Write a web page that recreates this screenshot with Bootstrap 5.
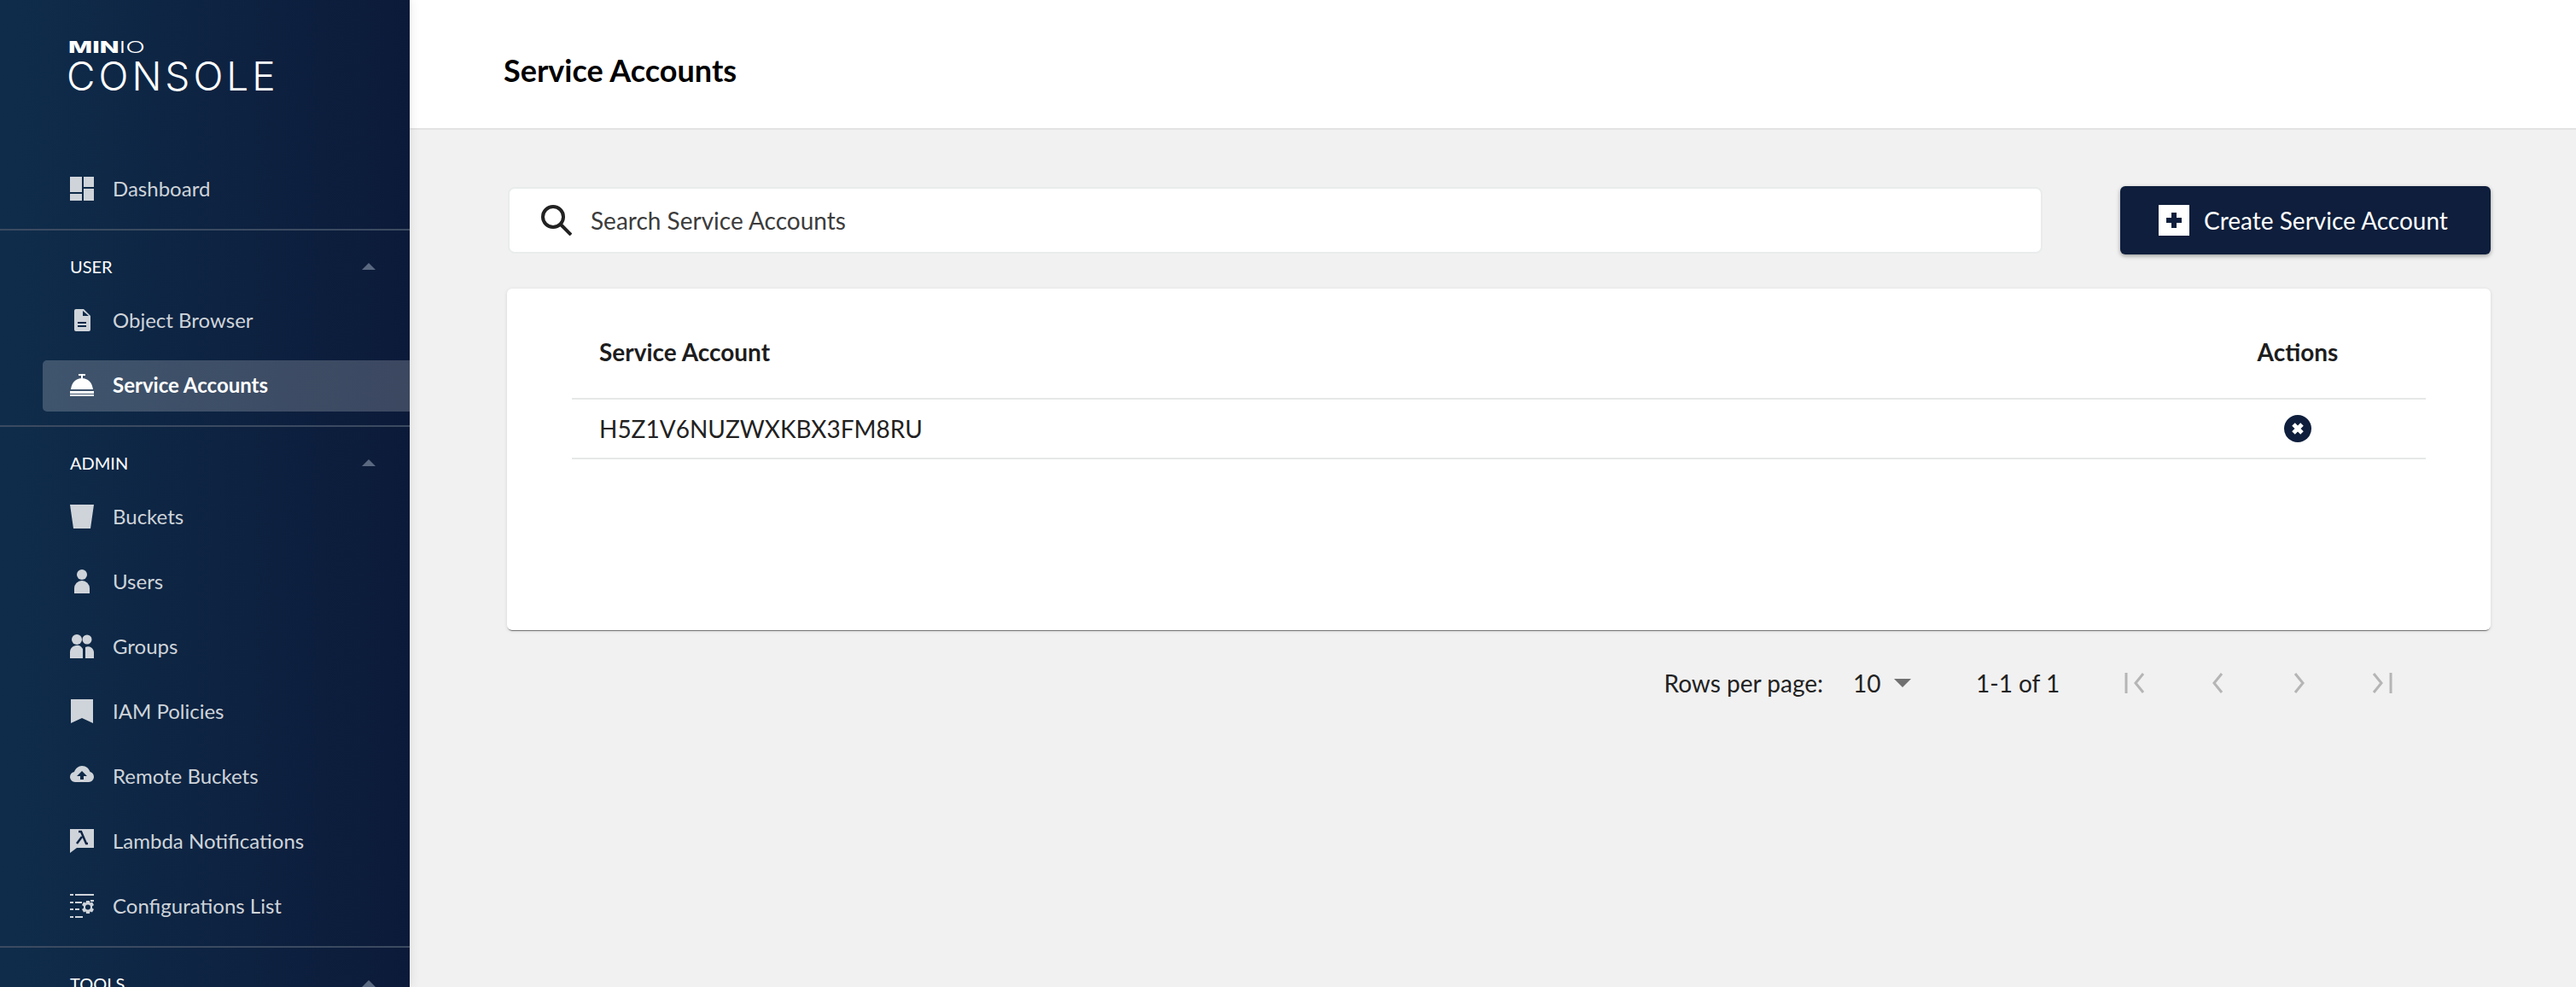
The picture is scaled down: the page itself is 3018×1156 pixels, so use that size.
<!DOCTYPE html>
<html lang="en">
<head>
<meta charset="utf-8">
<title>MinIO Console - Service Accounts</title>
<link href="https://cdn.jsdelivr.net/npm/bootstrap@5.3.0/dist/css/bootstrap.min.css" rel="stylesheet">
<style>
html,body{height:1156px;overflow:hidden}
body{font-family:"Lato","Liberation Sans",sans-serif;background:#f1f1f1;color:#1a1a1a;text-rendering:optimizeLegibility;font-feature-settings:"liga" 1}
.shell{height:1156px}
.side{width:480px;flex:none;height:1156px;overflow:hidden;background:linear-gradient(90deg,#0f2d4b 0%,#0c1a39 100%);box-shadow:0 0 12px rgba(0,0,0,.1);position:relative;z-index:2}
.brand{height:183px;padding:44px 0 0 78px;color:#fff}
.brand-top{font-family:"Inter",sans-serif;font-weight:800;font-size:19px;line-height:23px;height:23px;transform:scaleX(1.57);transform-origin:left center;margin-left:2px}
.brand-top span{font-weight:300}
.brand-main{font-family:"Inter",sans-serif;font-weight:300;font-size:46px;line-height:42px;letter-spacing:4px;margin-top:1px}
.side-sec{border-top:2px solid #3b4a60;padding-bottom:9px}
.side-first{padding-bottom:9px}
.sec-head{height:67px;padding:30px 40px 0 82px;color:#fff;font-size:20px;line-height:24px}
.sec-caret{width:0;height:0;border-left:8px solid transparent;border-right:8px solid transparent;border-bottom:8px solid #5a6880}
.side-link{height:76px;padding-left:82px;color:#cfd4da;font-size:24px;text-decoration:none;position:relative}
.side-ico{width:28px;height:28px;margin-right:22px;flex:none;fill:#cfd4da}
.side-link.on{color:#fff;font-weight:700}
.side-link.on .side-ico{fill:#fff}
.side-link.on::before{content:"";position:absolute;left:50px;right:0;top:9px;height:60px;background:rgba(255,255,255,.2);border-radius:5px 0 0 5px}
.side-link>*{position:relative}
.top-bar{height:152px;background:#fff;border-bottom:2px solid #e3e3e3;padding:16px 0 0 110px}
.top-bar h1{font-size:36px;font-weight:700;color:#000;margin:0}
.work{padding:66px 100px 0 114px}
.tools{height:80px}
.finder{height:78px;width:1798px;margin-left:1px;background:#fff;border:2px solid #e9ecec;border-radius:8px;padding-left:37px}
.finder svg{width:36px;height:36px;margin-right:22px;flex:none}
.finder input{border:0;outline:0;background:transparent;font-size:28px;color:#333;padding:0;width:100%;font-family:inherit}
.finder input::placeholder{color:#3c3c3c;opacity:1}
.btn-make{width:434px;height:80px;background:#0e1e3c;color:#fff;border:0;border-radius:6px;font-size:28px;box-shadow:0 2px 5px rgba(0,0,0,.35);padding:0 5px 0 0}
.btn-make:hover{background:#0e1e3c;color:#fff}
.plus-box{width:36px;height:36px;background:#fff;margin-right:17px}
.panel{margin-top:40px;height:400px;background:#fff;border:0;border-radius:6px;box-shadow:0 2px 1px -1px rgba(0,0,0,.5),0 1px 4px rgba(0,0,0,.12);padding:0 76px}
.grid-t{margin:0;font-size:28px}
.grid-t th{height:129px;padding:20px 0 0 32px;vertical-align:middle;font-weight:700;color:#1d1d1d;border-bottom:2px solid #e6e8e8;font-size:28px}
.grid-t td{height:70px;padding:0 0 0 32px;vertical-align:middle;color:#222;border-bottom:2px solid #e6e8e8}
.grid-t .act{width:300px;padding-left:0;text-align:center}
.x-ico{width:32px;height:32px;display:block;margin:0 auto}
.pager{height:124px;padding-right:80px;font-size:28px;color:#222}
.pg-size{margin-left:35px;width:144px}
.pg-range{width:110px;margin-right:29px;white-space:nowrap}
.pg-btn{width:96px;height:48px;background:transparent;border:0;padding:0}
.pg-btn svg{width:26px;height:26px;display:block;margin:0 auto;fill:none;stroke:#b5b5b5;stroke-width:3}
</style>
</head>
<body>
<div class="d-flex shell">
  <aside class="side">
    <div class="brand"><div class="brand-top">MIN<span>IO</span></div><div class="brand-main">CONSOLE</div></div>
    <div class="side-first">
      <a class="side-link d-flex align-items-center" href="#"><svg class="side-ico" viewBox="0 0 28 28"><path d="M0 0h14v18H0zM16 0h12v12H16zM0 20h14v8H0zM16 14h12v14H16z"/></svg><span>Dashboard</span></a>
    </div>
    <div class="side-sec">
      <div class="sec-head d-flex justify-content-between"><span>USER</span><span class="sec-caret mt-2"></span></div>
      <a class="side-link d-flex align-items-center" href="#"><svg class="side-ico" viewBox="0 0 28 28"><path fill-rule="evenodd" d="M7 1h9l8 8v16a2 2 0 0 1-2 2H7a2 2 0 0 1-2-2V3a2 2 0 0 1 2-2zM9 16v2h10v-2zM9 20v2h10v-2zM15 3v6h7z"/></svg><span>Object Browser</span></a>
      <a class="side-link on d-flex align-items-center" href="#"><svg class="side-ico" viewBox="0 0 28 28"><path d="M10 1h8v2h-3v3h-2V3h-3zM14 6c7 0 12 5 13 13H1C2 11 7 6 14 6zM0 21h28v3H0zM0 25h28v2H0z"/></svg><span>Service Accounts</span></a>
    </div>
    <div class="side-sec">
      <div class="sec-head d-flex justify-content-between"><span>ADMIN</span><span class="sec-caret mt-2"></span></div>
      <a class="side-link d-flex align-items-center" href="#"><svg class="side-ico" viewBox="0 0 28 28"><path d="M0 0h28l-4 28H4z"/></svg><span>Buckets</span></a>
      <a class="side-link d-flex align-items-center" href="#"><svg class="side-ico" viewBox="0 0 28 28"><circle cx="14" cy="6" r="6"/><path d="M5 28V22a9 9 0 0 1 18 0v6z"/></svg><span>Users</span></a>
      <a class="side-link d-flex align-items-center" href="#"><svg class="side-ico" viewBox="0 0 28 28"><circle cx="8" cy="6" r="6"/><circle cx="20" cy="6" r="5.500"/><path d="M0 28v-7a8 8 0 0 1 15-4v11zM18 28V15a7 7 0 0 1 10 6v7z"/></svg><span>Groups</span></a>
      <a class="side-link d-flex align-items-center" href="#"><svg class="side-ico" viewBox="0 0 28 28"><path d="M1 0h26v28L14 22 1 28z"/></svg><span>IAM Policies</span></a>
      <a class="side-link d-flex align-items-center" href="#"><svg class="side-ico" viewBox="0 0 28 28"><path fill-rule="evenodd" d="M14 2c5 0 8 3 9.500 7 2.500.5 4.500 3 4.500 6s-3 6-6 6H6c-3 0-6-3-6-6s2-5.500 5-6c1.500-4 5-7 9-7zM14 8l-6 6h4v4h4v-4h4z"/></svg><span>Remote Buckets</span></a>
      <a class="side-link d-flex align-items-center" href="#"><svg class="side-ico" viewBox="0 0 28 28"><path d="M0 0h28v22H8l-8 6z"/><path d="M10 3h3l6 14h2M14 9l-6 8" fill="none" stroke="#0e2444" stroke-width="2.500"/></svg><span>Lambda Notifications</span></a>
      <a class="side-link d-flex align-items-center" href="#"><svg class="side-ico" viewBox="0 0 28 28"><path d="M0 0h4v2H0zM6 0h22v2H6zM0 9h4v2H0zM6 9h8v2H6zM0 17h4v2H0zM6 17h5v2H6zM0 26h4v2H0zM6 26h9v2H6zM24 7h4v2h-4z"/><path fill-rule="evenodd" d="M19 8h4l.5 2.500 2.500-1 2 3.500-2 1.500v2l2 1.500-2 3.500-2.500-1-.5 2.500h-4l-.5-2.500-2.500 1-2-3.500 2-1.500v-2l-2-1.500 2-3.500 2.500 1zM21 12.500a3 3 0 1 0 0 6 3 3 0 0 0 0-6z"/></svg><span>Configurations List</span></a>
    </div>
    <div class="side-sec">
      <div class="sec-head d-flex justify-content-between"><span>TOOLS</span><span class="sec-caret mt-2"></span></div>
    </div>
  </aside>
  <main class="flex-grow-1">
    <header class="top-bar d-flex align-items-center"><h1>Service Accounts</h1></header>
    <div class="work">
      <div class="tools d-flex justify-content-between align-items-center">
        <label class="finder d-flex align-items-center mb-0">
          <svg viewBox="0 0 36 36" fill="none" stroke="#222" stroke-width="4"><circle cx="14" cy="14" r="12"/><path d="M23 23l12 12"/></svg>
          <input type="text" placeholder="Search Service Accounts" aria-label="Search Service Accounts">
        </label>
        <button class="btn btn-make d-flex align-items-center justify-content-center" type="button">
          <span class="plus-box d-flex align-items-center justify-content-center"><svg width="18" height="18" viewBox="0 0 18 18" fill="#0e1e3c"><path d="M6 0h6v6h6v6h-6v6H6v-6H0V6h6z"/></svg></span>
          Create Service Account
        </button>
      </div>
      <div class="panel card">
        <table class="table grid-t">
          <thead><tr><th>Service Account</th><th class="act">Actions</th></tr></thead>
          <tbody><tr><td>H5Z1V6NUZWXKBX3FM8RU</td><td class="act"><svg class="x-ico" viewBox="0 0 32 32"><circle cx="16" cy="16" r="16" fill="#0e1e3c"/><path d="M11 11l10 10M21 11L11 21" stroke="#fff" stroke-width="5"/></svg></td></tr></tbody>
        </table>
      </div>
      <div class="pager d-flex justify-content-end align-items-center">
        <span>Rows per page:</span>
        <span class="pg-size d-flex align-items-center"><span>10</span><svg class="ms-3" width="20" height="10" viewBox="0 0 20 10"><path d="M0 0h20L10 10z" fill="#707070"/></svg></span>
        <span class="pg-range">1-1 of 1</span>
        <button class="pg-btn" type="button" disabled aria-label="First page"><svg viewBox="0 0 26 26"><path d="M2 1v24M22 2L13 13l9 11"/></svg></button>
        <button class="pg-btn" type="button" disabled aria-label="Previous page"><svg viewBox="0 0 26 26"><path d="M18 2L9 13l9 11"/></svg></button>
        <button class="pg-btn" type="button" disabled aria-label="Next page"><svg viewBox="0 0 26 26"><path d="M8 2l9 11-9 11"/></svg></button>
        <button class="pg-btn" type="button" disabled aria-label="Last page"><svg viewBox="0 0 26 26"><path d="M24 1v24M4 2l9 11-9 11"/></svg></button>
      </div>
    </div>
  </main>
</div>
<script src="https://cdn.jsdelivr.net/npm/bootstrap@5.3.0/dist/js/bootstrap.bundle.min.js"></script>
</body>
</html>
